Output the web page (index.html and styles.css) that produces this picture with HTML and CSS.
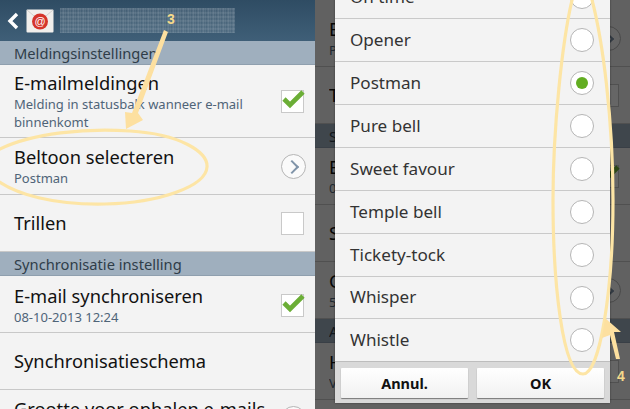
FILE: index.html
```html
<!DOCTYPE html>
<html lang="en">
<head>
    <meta charset="UTF-8">
    <title>E-mail instellingen</title>
    <link rel="stylesheet" href="styles.css">
</head>
<body>
    <div class="shots">
        <div class="phone">
            <div class="topbar">
                <svg class="back" width="12" height="18" viewBox="0 0 12 18">
                    <path d="M10 2 L3 9 L10 16" fill="none" stroke="#fff" stroke-width="3.4"/>
                </svg>
                <svg class="mail-icon" width="28" height="24" viewBox="0 0 28 24">
                    <rect x="0.5" y="0.5" width="27" height="23" rx="1" fill="#f1efec"/>
                    <path d="M1 1 L14 12 L27 1" fill="none" stroke="#d3d1ce"/>
                    <circle cx="14" cy="12.5" r="8" fill="#d5352b"/>
                    <text x="14" y="16" class="at">@</text>
                </svg>
                <div class="account"></div>
            </div>
            <div class="section">Meldingsinstellingen</div>
            <div class="row row-tall">
                <div class="row-text">
                    <div class="title">E-mailmeldingen</div>
                    <div class="sub">Melding in statusbalk wanneer e-mail binnenkomt</div>
                </div>
                <span class="check"><svg class="tick" width="24" height="22" viewBox="0 0 24 22"><path d="M3 10 L9 16 L22 3" fill="none" stroke="#6bae36" stroke-width="4.6"/></svg></span>
            </div>
            <div class="row">
                <div class="row-text">
                    <div class="title">Beltoon selecteren</div>
                    <div class="sub">Postman</div>
                </div>
                <span class="arrow"></span>
            </div>
            <div class="row">
                <div class="row-text"><div class="title">Trillen</div></div>
                <span class="check"></span>
            </div>
            <div class="section">Synchronisatie instelling</div>
            <div class="row row-sync">
                <div class="row-text">
                    <div class="title">E-mail synchroniseren</div>
                    <div class="sub">08-10-2013 12:24</div>
                </div>
                <span class="check"><svg class="tick" width="24" height="22" viewBox="0 0 24 22"><path d="M3 10 L9 16 L22 3" fill="none" stroke="#6bae36" stroke-width="4.6"/></svg></span>
            </div>
            <div class="row">
                <div class="row-text"><div class="title">Synchronisatieschema</div></div>
            </div>
            <div class="row">
                <div class="row-text">
                    <div class="title nowrap">Grootte voor ophalen e-mails</div>
                    <div class="sub">50 KB</div>
                </div>
                <span class="arrow"></span>
            </div>
        </div>

        <div class="phone phone-dim">
            <div class="back-list">
                <div class="row">
                    <div class="row-text">
                        <div class="title">Beltoon</div>
                        <div class="sub">Postman</div>
                    </div>
                    <span class="arrow"></span>
                </div>
                <div class="row">
                    <div class="row-text"><div class="title">Trillen</div></div>
                    <span class="check"></span>
                </div>
                <div class="section"><span>Synchronisatie</span></div>
                <div class="row">
                    <div class="row-text">
                        <div class="title">E-mail</div>
                        <div class="sub">08-10-2013</div>
                    </div>
                    <span class="check"><svg class="tick" width="24" height="22" viewBox="0 0 24 22"><path d="M3 10 L9 16 L22 3" fill="none" stroke="#6bae36" stroke-width="4.6"/></svg></span>
                </div>
                <div class="row">
                    <div class="row-text"><div class="title">Synchronisatieschema</div></div>
                </div>
                <div class="row">
                    <div class="row-text">
                        <div class="title">Grootte</div>
                        <div class="sub">50 KB</div>
                    </div>
                    <span class="arrow"></span>
                </div>
                <div class="section"><span>Algemeen</span></div>
                <div class="row">
                    <div class="row-text">
                        <div class="title">Handtekening</div>
                        <div class="sub">Verzonden</div>
                    </div>
                    <span class="check"></span>
                </div>
            </div>
            <div class="dim"></div>
            <div class="dialog">
                <div class="opt"><span>On time</span><i class="radio"></i></div>
                <div class="opt"><span>Opener</span><i class="radio"></i></div>
                <div class="opt"><span>Postman</span><i class="radio selected"></i></div>
                <div class="opt"><span>Pure bell</span><i class="radio"></i></div>
                <div class="opt"><span>Sweet favour</span><i class="radio"></i></div>
                <div class="opt"><span>Temple bell</span><i class="radio"></i></div>
                <div class="opt"><span>Tickety-tock</span><i class="radio"></i></div>
                <div class="opt opt-short"><span>Whisper</span><i class="radio"></i></div>
                <div class="opt opt-short opt-last"><span>Whistle</span><i class="radio"></i></div>
                <div class="dialog-btns">
                    <button class="btn">Annul.</button>
                    <button class="btn">OK</button>
                </div>
            </div>
        </div>
    </div>

    <!-- yellow hand drawn notes on top of the screenshot -->
    <svg class="notes" width="630" height="409" viewBox="0 0 630 409">
        <g fill="none" stroke="#fde5a5" stroke-width="3.2">
            <path d="M-6 152 C30 132 90 128 130 131 C180 134 208 152 207 167 C206 186 160 203 105 204 C55 205 15 195 -6 178"/>
            <path d="M573 -4 C562 40 553 130 553 200 C553 280 562 374 583 374 C600 374 613 290 613 200 C613 120 603 40 591 -4"/>
        </g>
        <g fill="#fde0a0">
            <path d="M164 30 L168 32 L138 113 L143 120 L126 129 L125 112 L132 113 Z"/>
            <path d="M605 318 L621 332 L614 332 L620 359 L616 359 L610 335 L602 338 Z"/>
        </g>
        <text x="171" y="24" class="note-num">3</text>
        <text x="621" y="381" class="note-num">4</text>
    </svg>
</body>
</html>
```

FILE: styles.css
```css
* {
    box-sizing: border-box;
}
html, body {
    margin: 0;
    padding: 0;
}
body {
    width: 630px;
    height: 409px;
    overflow: hidden;
    position: relative;
    font-family: "Noto Sans", "Open Sans", sans-serif;
    background: #f3f3f3;
}
.shots {
    display: flex;
    height: 409px;
}
.phone {
    width: 315px;
    height: 409px;
    overflow: hidden;
    background: #f3f3f3;
    position: relative;
}
.topbar {
    height: 41px;
    display: flex;
    align-items: center;
    padding-left: 7px;
    background: linear-gradient(#2f4c63, #3f5f78);
}
.mail-icon {
    margin-left: 7px;
}
.at {
    font-size: 11px;
    fill: #fff;
    text-anchor: middle;
    font-family: "Liberation Sans", sans-serif;
}
.account {
    width: 175px;
    height: 25px;
    margin-left: 6px;
    background:
        repeating-linear-gradient(90deg, rgba(255, 255, 255, 0.16) 0, rgba(255, 255, 255, 0.03) 2px, rgba(255, 255, 255, 0.2) 3px, rgba(255, 255, 255, 0.05) 5px),
        repeating-linear-gradient(0deg, rgba(255, 255, 255, 0.14) 0, rgba(255, 255, 255, 0) 2px, rgba(255, 255, 255, 0.12) 4px);
}
.section {
    height: 24px;
    padding-left: 14px;
    font-size: 14.7px;
    line-height: 24px;
    color: #2f3d49;
    background: #9fafbe;
    border-bottom: 1px solid #8f9fae;
}
.row {
    height: 57px;
    display: flex;
    align-items: center;
    padding: 0 9px 0 14px;
    border-bottom: 1px solid #c8c8c8;
}
.row-tall {
    height: 73px;
}
.row-sync {
    padding-top: 2px;
}
.row-text {
    flex: 1;
    min-width: 0;
}
.title {
    font-size: 18.3px;
    line-height: 24px;
    color: #111;
}
.nowrap {
    white-space: nowrap;
}
.sub {
    font-size: 13px;
    line-height: 18px;
    color: #4f6478;
}
.check {
    width: 23px;
    height: 23px;
    flex: none;
    background: #fff;
    border: 1px solid #c9c9c9;
    position: relative;
    margin: 0 2px 0 6px;
}
.tick {
    position: absolute;
    left: -1px;
    top: -2px;
    overflow: visible;
}
.arrow {
    width: 25px;
    height: 25px;
    flex: none;
    border-radius: 50%;
    border: 1px solid #b5b5b5;
    background: #fafafa;
    position: relative;
}
.arrow::after {
    content: "";
    position: absolute;
    left: 5px;
    top: 7px;
    width: 8px;
    height: 8px;
    border-right: 2.5px solid #7f93a8;
    border-top: 2.5px solid #7f93a8;
    transform: rotate(45deg);
}

/* right screenshot: same list behind a dim layer, cut off at the dialog edge */
.back-list {
    margin-top: 10px;
}
.back-list .row-text {
    flex: none;
    width: 6px;
    margin-right: auto;
    overflow: hidden;
    white-space: nowrap;
}
.back-list .section span {
    display: block;
    width: 6px;
    overflow: hidden;
}
.dim {
    position: absolute;
    inset: 0;
    background: rgba(0, 0, 0, 0.6);
}
.dialog {
    position: absolute;
    left: 20px;
    top: -24px;
    width: 275px;
    height: 427px;
    background: #f3f3f3;
    box-shadow: 0 0 2px rgba(0, 0, 0, 0.4);
}
.opt {
    height: 43px;
    display: flex;
    align-items: center;
    justify-content: space-between;
    padding: 0 16px 0 15px;
    border-bottom: 1px solid #c9c9c9;
    font-size: 17.1px;
    color: #333;
}
.opt span {
    margin-top: -2px;
}
.opt-short {
    height: 42px;
}
.opt-last {
    border-bottom: none;
}
.radio {
    width: 24px;
    height: 24px;
    border-radius: 50%;
    background: #fff;
    border: 1px solid #b5b5b5;
    display: flex;
    align-items: center;
    justify-content: center;
}
.radio.selected::after {
    content: "";
    width: 12px;
    height: 12px;
    border-radius: 50%;
    background: #62ad21;
}
.dialog-btns {
    height: 42px;
    display: flex;
    gap: 9px;
    padding: 6px 6px 0;
    background: #d9d9d9;
    border-top: 1px solid #bdbdbd;
}
.btn {
    flex: 1;
    height: 30px;
    padding: 0;
    border: none;
    border-radius: 1px;
    background: linear-gradient(#fff, #f1f1f1);
    box-shadow: 0 1px 1px rgba(0, 0, 0, 0.45);
    font-family: "Noto Sans", sans-serif;
    font-size: 14.5px;
    font-weight: 700;
    color: #111;
}

.notes {
    position: absolute;
    left: 0;
    top: 0;
}
.note-num {
    font-family: "Liberation Sans", sans-serif;
    font-size: 14px;
    font-weight: 700;
    fill: #f5d98a;
    text-anchor: middle;
}
```
